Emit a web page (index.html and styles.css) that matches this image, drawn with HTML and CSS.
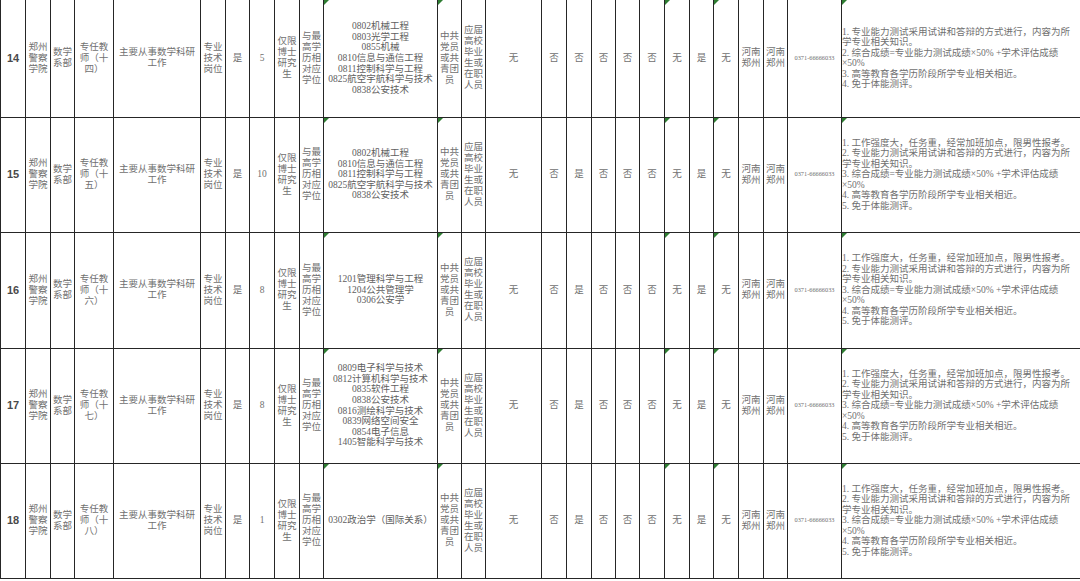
FILE: index.html
```html
<!DOCTYPE html>
<html lang="zh-CN">
<head>
<meta charset="utf-8">
<title>招聘岗位表</title>
<link rel="stylesheet" href="styles.css">
</head>
<body>
<table class="sheet">
<colgroup>
<col style="width:25px"><col style="width:25px"><col style="width:24px"><col style="width:39px"><col style="width:87px">
<col style="width:25px"><col style="width:24px"><col style="width:25px"><col style="width:25px"><col style="width:24px">
<col style="width:114px"><col style="width:24px"><col style="width:24px"><col style="width:56px">
<col style="width:25px"><col style="width:25px"><col style="width:24px"><col style="width:24px"><col style="width:25px">
<col style="width:25px"><col style="width:24px"><col style="width:25px"><col style="width:25px"><col style="width:24px">
<col style="width:54px"><col style="width:239px">
</colgroup>
<tbody>
<tr class="r14">
<td class="num">14</td><td>郑州警察学院</td><td>数学系部</td><td>专任教师（十四）</td><td>主要从事数学科研工作</td>
<td>专业技术岗位</td><td>是</td><td>5</td><td>仅限博士研究生</td><td>与最高学历相对应学位</td>
<td class="maj mk"><div>0802机械工程</div><div>0803光学工程</div><div>0855机械</div><div>0810信息与通信工程</div><div>0811控制科学与工程</div><div>0825航空宇航科学与技术</div><div>0838公安技术</div></td>
<td class="mk">中共党员或共青团员</td><td>应届高校毕业生或在职人员</td><td>无</td>
<td>否</td><td>否</td><td>否</td><td>否</td><td>否</td>
<td class="mk">无</td><td>是</td><td class="mk">无</td><td>河南郑州</td><td>河南郑州</td>
<td class="tel"><span class="tiny">0371-66666033</span></td>
<td class="rem mk"><div>1. 专业能力测试采用试讲和答辩的方式进行，内容为所</div><div>学专业相关知识。</div><div>2. 综合成绩=专业能力测试成绩×50% +学术评估成绩</div><div>×50%</div><div>3. 高等教育各学历阶段所学专业相关相近。</div><div>4. 免于体能测评。</div></td>
</tr>
<tr class="r15">
<td class="num">15</td><td>郑州警察学院</td><td>数学系部</td><td>专任教师（十五）</td><td>主要从事数学科研工作</td>
<td>专业技术岗位</td><td>是</td><td>10</td><td>仅限博士研究生</td><td>与最高学历相对应学位</td>
<td class="maj mk"><div>0802机械工程</div><div>0810信息与通信工程</div><div>0811控制科学与工程</div><div>0825航空宇航科学与技术</div><div>0838公安技术</div></td>
<td class="mk">中共党员或共青团员</td><td>应届高校毕业生或在职人员</td><td>无</td>
<td>否</td><td>是</td><td>否</td><td>否</td><td>否</td>
<td class="mk">无</td><td>是</td><td class="mk">无</td><td>河南郑州</td><td>河南郑州</td>
<td class="tel"><span class="tiny">0371-66666033</span></td>
<td class="rem mk"><div>1. 工作强度大，任务重，经常加班加点，限男性报考。</div><div>2. 专业能力测试采用试讲和答辩的方式进行，内容为所</div><div>学专业相关知识。</div><div>3. 综合成绩=专业能力测试成绩×50% +学术评估成绩</div><div>×50%</div><div>4. 高等教育各学历阶段所学专业相关相近。</div><div>5. 免于体能测评。</div></td>
</tr>
<tr class="r16">
<td class="num">16</td><td>郑州警察学院</td><td>数学系部</td><td>专任教师（十六）</td><td>主要从事数学科研工作</td>
<td>专业技术岗位</td><td>是</td><td>8</td><td>仅限博士研究生</td><td>与最高学历相对应学位</td>
<td class="maj mk"><div>1201管理科学与工程</div><div>1204公共管理学</div><div>0306公安学</div></td>
<td class="mk">中共党员或共青团员</td><td>应届高校毕业生或在职人员</td><td>无</td>
<td>否</td><td>是</td><td>否</td><td>否</td><td>否</td>
<td class="mk">无</td><td>是</td><td class="mk">无</td><td>河南郑州</td><td>河南郑州</td>
<td class="tel"><span class="tiny">0371-66666033</span></td>
<td class="rem mk"><div>1. 工作强度大，任务重，经常加班加点，限男性报考。</div><div>2. 专业能力测试采用试讲和答辩的方式进行，内容为所</div><div>学专业相关知识。</div><div>3. 综合成绩=专业能力测试成绩×50% +学术评估成绩</div><div>×50%</div><div>4. 高等教育各学历阶段所学专业相关相近。</div><div>5. 免于体能测评。</div></td>
</tr>
<tr class="r17">
<td class="num">17</td><td>郑州警察学院</td><td>数学系部</td><td>专任教师（十七）</td><td>主要从事数学科研工作</td>
<td>专业技术岗位</td><td>是</td><td>8</td><td>仅限博士研究生</td><td>与最高学历相对应学位</td>
<td class="maj mk"><div>0809电子科学与技术</div><div>0812计算机科学与技术</div><div>0835软件工程</div><div>0838公安技术</div><div>0816测绘科学与技术</div><div>0839网络空间安全</div><div>0854电子信息</div><div>1405智能科学与技术</div></td>
<td class="mk">中共党员或共青团员</td><td>应届高校毕业生或在职人员</td><td>无</td>
<td>否</td><td>是</td><td>否</td><td>否</td><td>否</td>
<td class="mk">无</td><td>是</td><td class="mk">无</td><td>河南郑州</td><td>河南郑州</td>
<td class="tel"><span class="tiny">0371-66666033</span></td>
<td class="rem mk"><div>1. 工作强度大，任务重，经常加班加点，限男性报考。</div><div>2. 专业能力测试采用试讲和答辩的方式进行，内容为所</div><div>学专业相关知识。</div><div>3. 综合成绩=专业能力测试成绩×50% +学术评估成绩</div><div>×50%</div><div>4. 高等教育各学历阶段所学专业相关相近。</div><div>5. 免于体能测评。</div></td>
</tr>
<tr class="r18">
<td class="num">18</td><td>郑州警察学院</td><td>数学系部</td><td>专任教师（十八）</td><td>主要从事数学科研工作</td>
<td>专业技术岗位</td><td>是</td><td>1</td><td>仅限博士研究生</td><td>与最高学历相对应学位</td>
<td class="maj mk"><div>0302政治学（国际关系）</div></td>
<td class="mk">中共党员或共青团员</td><td>应届高校毕业生或在职人员</td><td>无</td>
<td>否</td><td>是</td><td>否</td><td>否</td><td>否</td>
<td class="mk">无</td><td>是</td><td class="mk">无</td><td>河南郑州</td><td>河南郑州</td>
<td class="tel"><span class="tiny">0371-66666033</span></td>
<td class="rem mk"><div>1. 工作强度大，任务重，经常加班加点，限男性报考。</div><div>2. 专业能力测试采用试讲和答辩的方式进行，内容为所</div><div>学专业相关知识。</div><div>3. 综合成绩=专业能力测试成绩×50% +学术评估成绩</div><div>×50%</div><div>4. 高等教育各学历阶段所学专业相关相近。</div><div>5. 免于体能测评。</div></td>
</tr>
</tbody>
</table>
</body>
</html>
```

FILE: styles.css
```css
html, body {
  margin: 0;
  padding: 0;
  background: #ffffff;
}

body {
  font-family: "Liberation Serif", "Noto Sans CJK SC", serif;
  color: #707070;
}

.sheet {
  border-collapse: collapse;
  table-layout: fixed;
  width: 1080px;
}

.sheet td {
  border: 1px solid #262626;
  padding: 0 2px;
  text-align: center;
  vertical-align: middle;
  font-size: 9.5px;
  line-height: 11px;
  word-break: break-all;
  position: relative;
  overflow: hidden;
}

.sheet tr:first-child td {
  border-top: 0;
}

.sheet td:last-child {
  border-right: 0;
}

.r14 { height: 117px; }
.r15 { height: 115px; }
.r16 { height: 116px; }
.r17 { height: 115px; }
.r18 { height: 115px; }

.sheet td.num {
  font-family: "Liberation Sans", "Noto Sans", sans-serif;
  font-weight: bold;
  font-size: 11px;
  color: #4a4a4a;
}

.sheet td.maj {
  white-space: nowrap;
  line-height: 10.6px;
  color: #606060;
}

.sheet td.tel {
  padding: 0;
  white-space: nowrap;
}

.tiny {
  display: inline-block;
  font-size: 9px;
  margin: 0 -12px;
  transform: scale(0.7);
  transform-origin: center center;
  color: #707070;
}

.sheet td.rem {
  text-align: left;
  white-space: nowrap;
  padding: 0 2px 0 0;
  line-height: 10.5px;
}

.mk::before {
  content: "";
  position: absolute;
  left: 0;
  top: 0;
  border-top: 5px solid #2e7d32;
  border-right: 5px solid transparent;
}
```
